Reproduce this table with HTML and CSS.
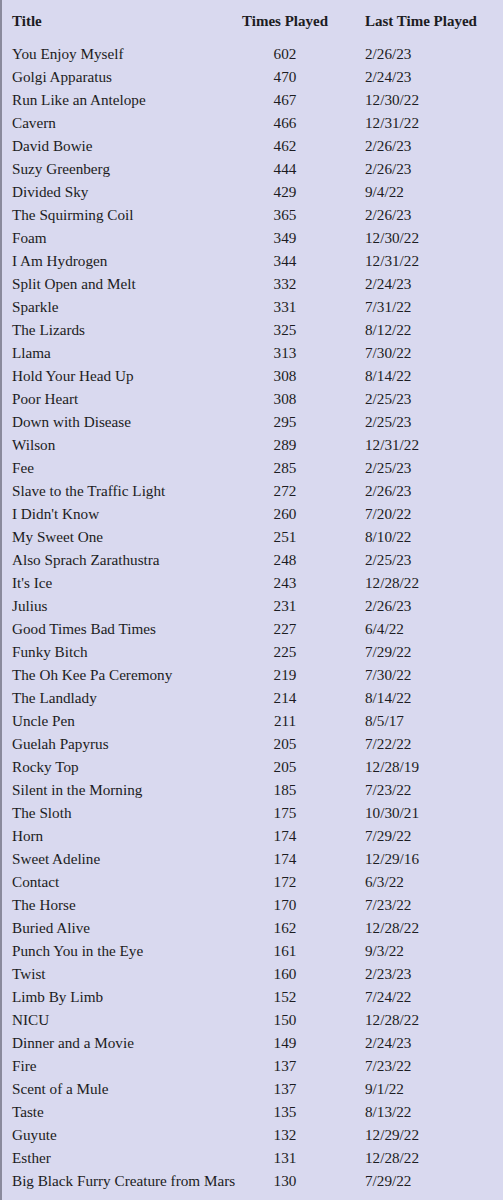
FILE: index.html
```html
<!DOCTYPE html>
<html>
<head>
<meta charset="utf-8">
<link rel="stylesheet" href="styles.css">
</head>
<body>
<div class="sheet">
  <div class="head">
    <div class="h c1">Title</div><div class="h c2">Times Played</div><div class="h c3">Last Time Played</div>
  </div>
  <div class="grid">
    <div class="c1">You Enjoy Myself</div><div class="c2">602</div><div class="c3">2/26/23</div>
    <div class="c1">Golgi Apparatus</div><div class="c2">470</div><div class="c3">2/24/23</div>
    <div class="c1">Run Like an Antelope</div><div class="c2">467</div><div class="c3">12/30/22</div>
    <div class="c1">Cavern</div><div class="c2">466</div><div class="c3">12/31/22</div>
    <div class="c1">David Bowie</div><div class="c2">462</div><div class="c3">2/26/23</div>
    <div class="c1">Suzy Greenberg</div><div class="c2">444</div><div class="c3">2/26/23</div>
    <div class="c1">Divided Sky</div><div class="c2">429</div><div class="c3">9/4/22</div>
    <div class="c1">The Squirming Coil</div><div class="c2">365</div><div class="c3">2/26/23</div>
    <div class="c1">Foam</div><div class="c2">349</div><div class="c3">12/30/22</div>
    <div class="c1">I Am Hydrogen</div><div class="c2">344</div><div class="c3">12/31/22</div>
    <div class="c1">Split Open and Melt</div><div class="c2">332</div><div class="c3">2/24/23</div>
    <div class="c1">Sparkle</div><div class="c2">331</div><div class="c3">7/31/22</div>
    <div class="c1">The Lizards</div><div class="c2">325</div><div class="c3">8/12/22</div>
    <div class="c1">Llama</div><div class="c2">313</div><div class="c3">7/30/22</div>
    <div class="c1">Hold Your Head Up</div><div class="c2">308</div><div class="c3">8/14/22</div>
    <div class="c1">Poor Heart</div><div class="c2">308</div><div class="c3">2/25/23</div>
    <div class="c1">Down with Disease</div><div class="c2">295</div><div class="c3">2/25/23</div>
    <div class="c1">Wilson</div><div class="c2">289</div><div class="c3">12/31/22</div>
    <div class="c1">Fee</div><div class="c2">285</div><div class="c3">2/25/23</div>
    <div class="c1">Slave to the Traffic Light</div><div class="c2">272</div><div class="c3">2/26/23</div>
    <div class="c1">I Didn't Know</div><div class="c2">260</div><div class="c3">7/20/22</div>
    <div class="c1">My Sweet One</div><div class="c2">251</div><div class="c3">8/10/22</div>
    <div class="c1">Also Sprach Zarathustra</div><div class="c2">248</div><div class="c3">2/25/23</div>
    <div class="c1">It's Ice</div><div class="c2">243</div><div class="c3">12/28/22</div>
    <div class="c1">Julius</div><div class="c2">231</div><div class="c3">2/26/23</div>
    <div class="c1">Good Times Bad Times</div><div class="c2">227</div><div class="c3">6/4/22</div>
    <div class="c1">Funky Bitch</div><div class="c2">225</div><div class="c3">7/29/22</div>
    <div class="c1">The Oh Kee Pa Ceremony</div><div class="c2">219</div><div class="c3">7/30/22</div>
    <div class="c1">The Landlady</div><div class="c2">214</div><div class="c3">8/14/22</div>
    <div class="c1">Uncle Pen</div><div class="c2">211</div><div class="c3">8/5/17</div>
    <div class="c1">Guelah Papyrus</div><div class="c2">205</div><div class="c3">7/22/22</div>
    <div class="c1">Rocky Top</div><div class="c2">205</div><div class="c3">12/28/19</div>
    <div class="c1">Silent in the Morning</div><div class="c2">185</div><div class="c3">7/23/22</div>
    <div class="c1">The Sloth</div><div class="c2">175</div><div class="c3">10/30/21</div>
    <div class="c1">Horn</div><div class="c2">174</div><div class="c3">7/29/22</div>
    <div class="c1">Sweet Adeline</div><div class="c2">174</div><div class="c3">12/29/16</div>
    <div class="c1">Contact</div><div class="c2">172</div><div class="c3">6/3/22</div>
    <div class="c1">The Horse</div><div class="c2">170</div><div class="c3">7/23/22</div>
    <div class="c1">Buried Alive</div><div class="c2">162</div><div class="c3">12/28/22</div>
    <div class="c1">Punch You in the Eye</div><div class="c2">161</div><div class="c3">9/3/22</div>
    <div class="c1">Twist</div><div class="c2">160</div><div class="c3">2/23/23</div>
    <div class="c1">Limb By Limb</div><div class="c2">152</div><div class="c3">7/24/22</div>
    <div class="c1">NICU</div><div class="c2">150</div><div class="c3">12/28/22</div>
    <div class="c1">Dinner and a Movie</div><div class="c2">149</div><div class="c3">2/24/23</div>
    <div class="c1">Fire</div><div class="c2">137</div><div class="c3">7/23/22</div>
    <div class="c1">Scent of a Mule</div><div class="c2">137</div><div class="c3">9/1/22</div>
    <div class="c1">Taste</div><div class="c2">135</div><div class="c3">8/13/22</div>
    <div class="c1">Guyute</div><div class="c2">132</div><div class="c3">12/29/22</div>
    <div class="c1">Esther</div><div class="c2">131</div><div class="c3">12/28/22</div>
    <div class="c1">Big Black Furry Creature from Mars</div><div class="c2">130</div><div class="c3">7/29/22</div>
  </div>
</div>
</body>
</html>
```
FILE: styles.css
```css
html, body {
  margin: 0;
  padding: 0;
  background: #d9d9ef;
}
.sheet {
  box-sizing: border-box;
  width: 503px;
  height: 1200px;
  background: #d9d9ef;
  border-left: 2px solid #8a8a9c;
  padding: 10px 0 0 10px;
  font-family: "Liberation Serif", "Times New Roman", serif;
  font-size: 15.2px;
  color: #1c1c22;
  overflow: hidden;
}
.head,
.grid {
  display: grid;
  grid-template-columns: 228px 90px 1fr;
}
.head {
  height: 31.7px;
  grid-template-rows: 23px;
  line-height: 23px;
}
.grid {
  grid-auto-rows: 23px;
  line-height: 23px;
}
.c1 {
  white-space: nowrap;
}
.c2 {
  text-align: center;
  white-space: nowrap;
}
.c3 {
  padding-left: 35px;
  white-space: nowrap;
}
.h {
  font-weight: bold;
  font-size: 15px;
}
```
